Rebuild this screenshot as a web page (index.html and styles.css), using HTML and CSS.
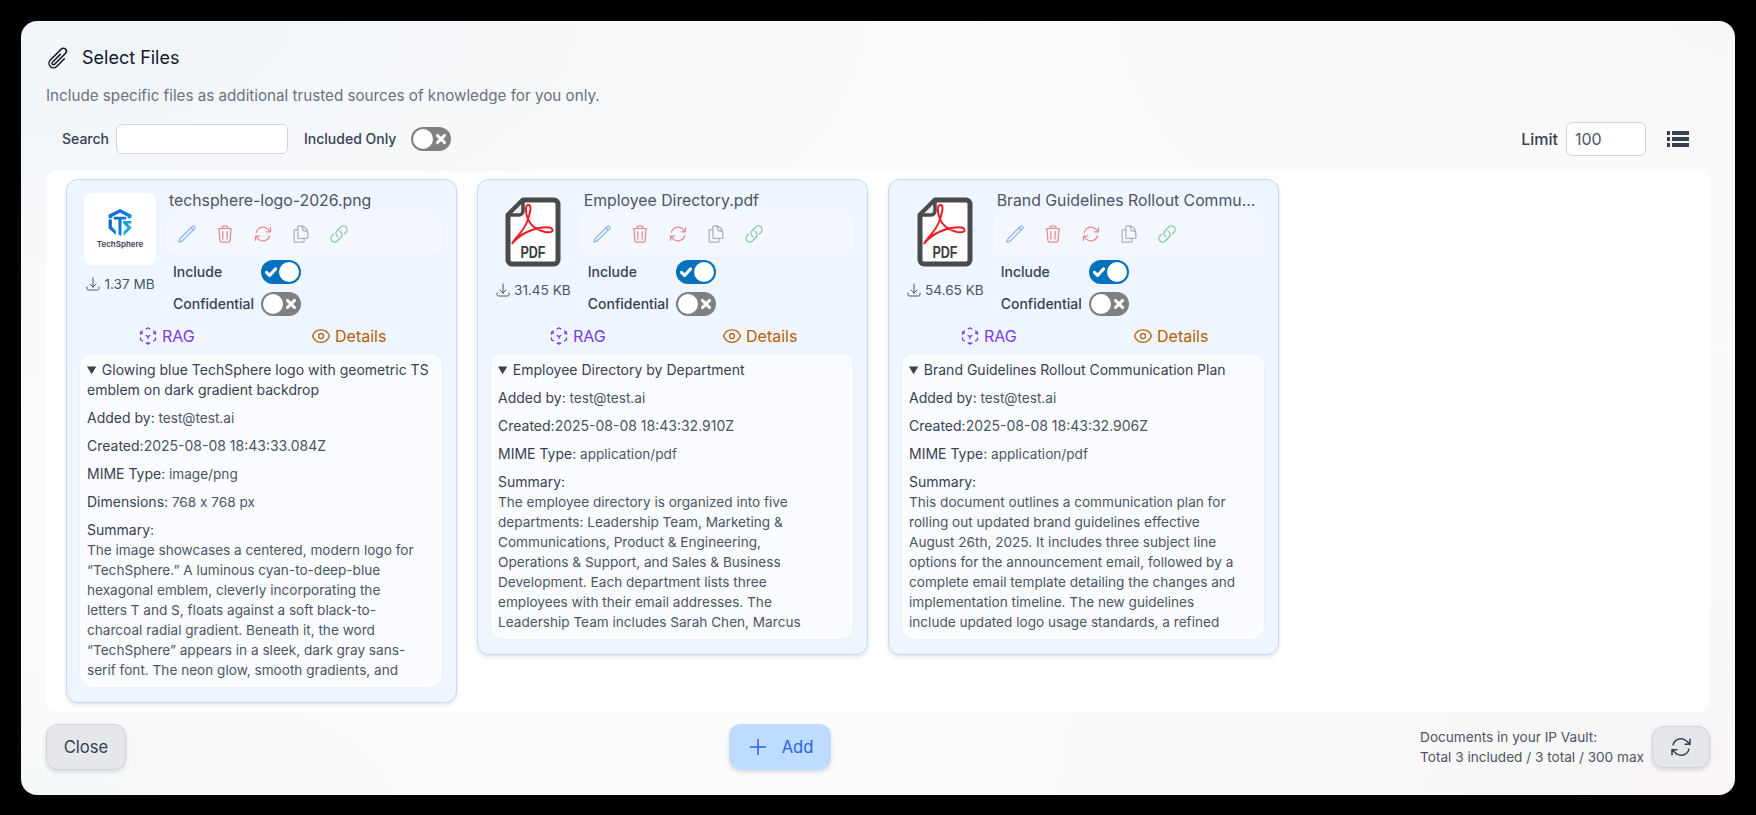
FILE: index.html
```html
<!DOCTYPE html>
<html lang="en">
<head>
    <meta charset="UTF-8">
    <meta name="viewport" content="width=device-width, initial-scale=1.0">
    <title>Select Files</title>
    <link rel="stylesheet" href="styles.css">
</head>
<body>
    <svg class="sprite" aria-hidden="true">
        <symbol id="i-pencil" viewBox="0 0 24 24"><path d="m16.862 4.487 1.687-1.688a1.875 1.875 0 1 1 2.652 2.652L6.832 19.82a4.5 4.5 0 0 1-1.897 1.13l-2.685.8.8-2.685a4.5 4.5 0 0 1 1.13-1.897L16.863 4.487Zm0 0L19.5 7.125"/></symbol>
        <symbol id="i-trash" viewBox="0 0 24 24"><path d="m14.74 9-.346 9m-4.788 0L9.26 9m9.968-3.21c.342.052.682.107 1.022.166m-1.022-.165L18.16 19.673a2.25 2.25 0 0 1-2.244 2.077H8.084a2.25 2.25 0 0 1-2.244-2.077L4.772 5.79m14.456 0a48.108 48.108 0 0 0-3.478-.397m-12 .562c.34-.059.68-.114 1.022-.165m0 0a48.11 48.11 0 0 1 3.478-.397m7.5 0v-.916c0-1.18-.91-2.164-2.09-2.201a51.964 51.964 0 0 0-3.32 0c-1.18.037-2.09 1.022-2.09 2.201v.916m7.5 0a48.667 48.667 0 0 0-7.5 0"/></symbol>
        <symbol id="i-refresh" viewBox="0 0 24 24"><path d="M16.023 9.348h4.992v-.001M2.985 19.644v-4.992m0 0h4.992m-4.993 0 3.181 3.183a8.25 8.25 0 0 0 13.803-3.7M4.031 9.865a8.25 8.25 0 0 1 13.803-3.7l3.181 3.182m0-4.991v4.99"/></symbol>
        <symbol id="i-copy" viewBox="0 0 24 24"><path d="M15.75 17.25v3.375c0 .621-.504 1.125-1.125 1.125h-9.75a1.125 1.125 0 0 1-1.125-1.125V7.875c0-.621.504-1.125 1.125-1.125H6.75a9.06 9.06 0 0 1 1.5.124m7.5 10.376h3.375c.621 0 1.125-.504 1.125-1.125V11.25c0-4.46-3.243-8.161-7.5-8.876a9.06 9.06 0 0 0-1.5-.124H9.375c-.621 0-1.125.504-1.125 1.125v3.5m7.5 10.375H9.375a1.125 1.125 0 0 1-1.125-1.125v-9.25m12 6.625v-1.875a3.375 3.375 0 0 0-3.375-3.375h-1.5a1.125 1.125 0 0 1-1.125-1.125v-1.5a3.375 3.375 0 0 0-3.375-3.375H9.75"/></symbol>
        <symbol id="i-link" viewBox="0 0 24 24"><path d="M13.19 8.688a4.5 4.5 0 0 1 1.242 7.244l-4.5 4.5a4.5 4.5 0 0 1-6.364-6.364l1.757-1.757m13.35-.622 1.757-1.757a4.5 4.5 0 0 0-6.364-6.364l-4.5 4.5a4.5 4.5 0 0 0 1.242 7.244"/></symbol>
        <symbol id="i-eye" viewBox="0 0 24 24"><path d="M2.036 12.322a1.012 1.012 0 0 1 0-.639C3.423 7.51 7.36 4.5 12 4.5c4.638 0 8.573 3.007 9.963 7.178.07.207.07.431 0 .639C20.577 16.49 16.64 19.5 12 19.5c-4.638 0-8.573-3.007-9.963-7.178Z"/><path d="M15 12a3 3 0 1 1-6 0 3 3 0 0 1 6 0Z"/></symbol>
        <symbol id="i-cube" viewBox="0 0 24 24"><path d="m21 7.5-2.25-1.313M21 7.5v2.25m0-2.25-2.25 1.313M3 7.5l2.25-1.313M3 7.5l2.25 1.313M3 7.5v2.25m9 3 2.25-1.313M12 12.75l-2.25-1.313M12 12.75V15m0 6.75 2.25-1.313M12 21.75V19.5m0 2.25-2.25-1.313m0-16.875L12 2.25l2.25 1.313M21 14.25v2.25l-2.25 1.313m-13.5 0L3 16.5v-2.25"/></symbol>
        <symbol id="i-tray" viewBox="0 0 24 24"><path d="M3 16.5v2.25A2.25 2.25 0 0 0 5.25 21h13.5A2.25 2.25 0 0 0 21 18.75V16.5M16.5 12 12 16.5m0 0L7.5 12m4.5 4.5V3"/></symbol>
        <symbol id="i-check" viewBox="0 0 20 20"><path d="M3.5 10.5 8 15l8.5-9.5"/></symbol>
        <symbol id="i-x" viewBox="0 0 20 20"><path d="M5 5l10 10M15 5 5 15"/></symbol>
        <symbol id="i-pdf" viewBox="0 0 56 70">
            <path class="pdf-sheet" d="M18 3H49a4 4 0 0 1 4 4V63a4 4 0 0 1-4 4H7a4 4 0 0 1-4-4V18Z"/>
            <path class="pdf-fold" d="M18 3V14a4 4 0 0 1-4 4H3Z"/>
            <path class="pdf-mark" d="M7 47C10 41 18 35 22 25C25 17 27 9 24 8C20 7 20 15 23 22C26 30 32 33 40 35C46 36 50 34 46 31C42 29 30 31 22 35C15 38 9 44 7 47Z"/>
        </symbol>
    </svg>

    <div class="modal">
        <div class="modal-title">
            <svg class="icon icon-clip" viewBox="0 0 24 24"><path d="m18.375 12.739-7.693 7.693a4.5 4.5 0 0 1-6.364-6.364l10.94-10.94A3 3 0 1 1 19.5 7.372L8.552 18.32m.009-.01-.01.01m5.699-9.941-7.81 7.81a1.5 1.5 0 0 0 2.112 2.13"/></svg>
            <h2>Select Files</h2>
        </div>
        <p class="modal-sub">Include specific files as additional trusted sources of knowledge for you only.</p>

        <div class="toolbar">
            <label class="lbl" for="search">Search</label>
            <input class="search-input" id="search" type="text">
            <span class="lbl lbl-included">Included Only</span>
            <span class="toggle"><span class="knob"></span><svg class="mark"><use href="#i-x"/></svg></span>
            <span class="toolbar-gap"></span>
            <label class="limit-lbl" for="limit">Limit</label>
            <input class="limit-input" id="limit" type="text" value="100">
            <span class="list-btn"><i></i><i></i><i></i></span>
        </div>

        <div class="files">
            <!-- png card -->
            <div class="card">
                <div class="card-top">
                    <div class="card-left">
                        <div class="thumb">
                            <svg class="ts-logo" viewBox="0 0 25 28">
                                <defs>
                                    <linearGradient id="tsBlue" x1="0" y1="0" x2="1" y2="1"><stop offset="0" stop-color="#0a5fc4"/><stop offset="1" stop-color="#1590e0"/></linearGradient>
                                    <linearGradient id="tsCyan" x1="0" y1="0" x2="1" y2="1"><stop offset="0" stop-color="#1292dc"/><stop offset="1" stop-color="#19c4dc"/></linearGradient>
                                </defs>
                                <path d="M1.5 10V6.5L12.5 1 23.5 6.5V10H20V8.5L12.5 4.6 5 8.5V10Z" fill="url(#tsBlue)"/>
                                <path d="M1.5 11V19.5L8.5 26V22L4.6 18V11ZM6.5 8.5H18.5V11H14V27L11 25.5V11H6.5Z" fill="url(#tsBlue)"/>
                                <path d="M15.5 12.5H23.5V15H19.8L23.8 19 16 26.8V22.8L19.8 19 15.5 14.8Z" fill="url(#tsCyan)"/>
                            </svg>
                            <span class="ts-name">TechSphere</span>
                        </div>
                        <div class="size size-thumb"><svg class="icon"><use href="#i-tray"/></svg>1.37 MB</div>
                    </div>
                    <div class="card-right">
                        <div class="file-name">techsphere-logo-2026.png</div>
                        <div class="actions">
                            <svg class="icon a-blue"><use href="#i-pencil"/></svg>
                            <svg class="icon a-red"><use href="#i-trash"/></svg>
                            <svg class="icon a-red"><use href="#i-refresh"/></svg>
                            <svg class="icon a-gray"><use href="#i-copy"/></svg>
                            <svg class="icon a-green"><use href="#i-link"/></svg>
                        </div>
                        <div class="opt"><span class="lbl">Include</span><span class="toggle on"><svg class="mark"><use href="#i-check"/></svg><span class="knob"></span></span></div>
                        <div class="opt"><span class="lbl">Confidential</span><span class="toggle"><span class="knob"></span><svg class="mark"><use href="#i-x"/></svg></span></div>
                    </div>
                </div>
                <div class="tabs">
                    <span class="tab tab-rag"><svg class="icon"><use href="#i-cube"/></svg>RAG</span>
                    <span class="tab tab-details"><svg class="icon"><use href="#i-eye"/></svg>Details</span>
                </div>
                <div class="panel">
                    <details open>
                        <summary>Glowing blue TechSphere logo with geometric TS emblem on dark gradient backdrop</summary>
                        <p><b>Added by:</b> test@test.ai</p>
                        <p class="stamp"><b>Created:</b>2025-08-08 18:43:33.084Z</p>
                        <p><b>MIME Type:</b> image/png</p>
                        <p class="dims"><b>Dimensions:</b> 768 x 768 px</p>
                        <p><b>Summary:</b><br>The image showcases a centered, modern logo for “TechSphere.” A luminous cyan-to-deep-blue hexagonal emblem, cleverly incorporating the letters T and S, floats against a soft black-to-charcoal radial gradient. Beneath it, the word “TechSphere” appears in a sleek, dark gray sans-serif font. The neon glow, smooth gradients, and</p>
                    </details>
                </div>
            </div>

            <!-- pdf cards -->
            <div class="card">
                <div class="card-top">
                    <div class="card-left">
                        <svg class="pdf-icon" viewBox="0 0 56 70"><use href="#i-pdf"/><text class="pdf-text" x="28" y="61" text-anchor="middle" textLength="25" lengthAdjust="spacingAndGlyphs">PDF</text></svg>
                        <div class="size"><svg class="icon"><use href="#i-tray"/></svg>31.45 KB</div>
                    </div>
                    <div class="card-right">
                        <div class="file-name">Employee Directory.pdf</div>
                        <div class="actions">
                            <svg class="icon a-blue"><use href="#i-pencil"/></svg>
                            <svg class="icon a-red"><use href="#i-trash"/></svg>
                            <svg class="icon a-red"><use href="#i-refresh"/></svg>
                            <svg class="icon a-gray"><use href="#i-copy"/></svg>
                            <svg class="icon a-green"><use href="#i-link"/></svg>
                        </div>
                        <div class="opt"><span class="lbl">Include</span><span class="toggle on"><svg class="mark"><use href="#i-check"/></svg><span class="knob"></span></span></div>
                        <div class="opt"><span class="lbl">Confidential</span><span class="toggle"><span class="knob"></span><svg class="mark"><use href="#i-x"/></svg></span></div>
                    </div>
                </div>
                <div class="tabs">
                    <span class="tab tab-rag"><svg class="icon"><use href="#i-cube"/></svg>RAG</span>
                    <span class="tab tab-details"><svg class="icon"><use href="#i-eye"/></svg>Details</span>
                </div>
                <div class="panel">
                    <details open>
                        <summary>Employee Directory by Department</summary>
                        <p><b>Added by:</b> test@test.ai</p>
                        <p class="stamp"><b>Created:</b>2025-08-08 18:43:32.910Z</p>
                        <p><b>MIME Type:</b> application/pdf</p>
                        <p><b>Summary:</b><br>The employee directory is organized into five departments: Leadership Team, Marketing &amp; Communications, Product &amp; Engineering, Operations &amp; Support, and Sales &amp; Business Development. Each department lists three employees with their email addresses. The Leadership Team includes Sarah Chen, Marcus</p>
                    </details>
                </div>
            </div>

            <div class="card">
                <div class="card-top">
                    <div class="card-left">
                        <svg class="pdf-icon" viewBox="0 0 56 70"><use href="#i-pdf"/><text class="pdf-text" x="28" y="61" text-anchor="middle" textLength="25" lengthAdjust="spacingAndGlyphs">PDF</text></svg>
                        <div class="size"><svg class="icon"><use href="#i-tray"/></svg>54.65 KB</div>
                    </div>
                    <div class="card-right">
                        <div class="file-name">Brand Guidelines Rollout Communication Plan.pdf</div>
                        <div class="actions">
                            <svg class="icon a-blue"><use href="#i-pencil"/></svg>
                            <svg class="icon a-red"><use href="#i-trash"/></svg>
                            <svg class="icon a-red"><use href="#i-refresh"/></svg>
                            <svg class="icon a-gray"><use href="#i-copy"/></svg>
                            <svg class="icon a-green"><use href="#i-link"/></svg>
                        </div>
                        <div class="opt"><span class="lbl">Include</span><span class="toggle on"><svg class="mark"><use href="#i-check"/></svg><span class="knob"></span></span></div>
                        <div class="opt"><span class="lbl">Confidential</span><span class="toggle"><span class="knob"></span><svg class="mark"><use href="#i-x"/></svg></span></div>
                    </div>
                </div>
                <div class="tabs">
                    <span class="tab tab-rag"><svg class="icon"><use href="#i-cube"/></svg>RAG</span>
                    <span class="tab tab-details"><svg class="icon"><use href="#i-eye"/></svg>Details</span>
                </div>
                <div class="panel">
                    <details open>
                        <summary>Brand Guidelines Rollout Communication Plan</summary>
                        <p><b>Added by:</b> test@test.ai</p>
                        <p class="stamp"><b>Created:</b>2025-08-08 18:43:32.906Z</p>
                        <p><b>MIME Type:</b> application/pdf</p>
                        <p><b>Summary:</b><br>This document outlines a communication plan for rolling out updated brand guidelines effective August 26th, 2025. It includes three subject line options for the announcement email, followed by a complete email template detailing the changes and implementation timeline. The new guidelines include updated logo usage standards, a refined</p>
                    </details>
                </div>
            </div>
        </div>

        <div class="footer">
            <button class="btn btn-close">Close</button>
            <button class="btn btn-add"><svg class="icon" viewBox="0 0 24 24"><path d="M12 4.5v15m7.5-7.5h-15"/></svg>Add</button>
            <div class="footer-right">
                <div class="vault">Documents in your IP Vault:<br>Total 3 included / 3 total / 300 max</div>
                <button class="btn btn-refresh"><svg class="icon"><use href="#i-refresh"/></svg></button>
            </div>
        </div>
    </div>
</body>
</html>
```

FILE: styles.css
```css
* {
    box-sizing: border-box;
}
html, body {
    height: 100%;
}
body {
    margin: 0;
    padding: 21px;
    background: #000;
    font-family: Inter, "Noto Sans", sans-serif;
    font-size: 14px;
    line-height: 20px;
    color: #374151;
    overflow: hidden;
}
.sprite {
    display: none;
}
.icon {
    width: 24px;
    height: 24px;
    fill: none;
    stroke: currentColor;
    stroke-width: 1.5;
    stroke-linecap: round;
    stroke-linejoin: round;
    flex: none;
}

.modal {
    height: 774px;
    display: flex;
    flex-direction: column;
    padding: 25px 25px 0;
    border-radius: 16px;
    background:
        radial-gradient(1000px 420px at 0% 0%, #f1f5f9 0%, rgba(241, 245, 249, 0) 100%),
        radial-gradient(800px 500px at 100% 100%, #f9f5f8 0%, rgba(249, 245, 248, 0) 100%),
        radial-gradient(800px 400px at 100% 0%, #faf7f8 0%, rgba(250, 247, 248, 0) 100%),
        radial-gradient(600px 200px at 0% 100%, #f6f9f9 0%, rgba(246, 249, 249, 0) 100%),
        #fbfbfb;
}
.modal-title {
    display: flex;
    align-items: center;
    gap: 12px;
    height: 24px;
    color: #111827;
}
.modal-title h2 {
    margin: 0;
    font-size: 18px;
    line-height: 24px;
    font-weight: 400;
}
.modal-sub {
    margin: 14px 0;
    font-size: 15.2px;
    line-height: 24px;
    color: #6b7280;
}

.toolbar {
    display: flex;
    align-items: center;
    height: 34px;
    margin-bottom: 15px;
    padding: 0 21px 0 16px;
}
.lbl {
    font-size: 14px;
    font-weight: 500;
    color: #374151;
}
.search-input {
    width: 172px;
    height: 30px;
    margin: 0 16px 0 7px;
    border: 1px solid #d1d5db;
    border-radius: 6px;
    background: #fff;
}
.lbl-included {
    margin-right: 15px;
}
.toolbar-gap {
    flex: 1;
}
.limit-lbl {
    font-size: 16px;
    font-weight: 500;
    color: #374151;
}
.limit-input {
    width: 80px;
    height: 34px;
    margin: 0 21px 0 8px;
    padding: 0 8px;
    border: 1px solid #d1d5db;
    border-radius: 6px;
    background: #fff;
    font: 16px Inter, sans-serif;
    color: #4b5563;
}
.list-btn {
    display: flex;
    flex-direction: column;
    gap: 2px;
    width: 22px;
}
.list-btn i {
    display: block;
    height: 4px;
    background: linear-gradient(to right, #374151 3px, transparent 3px, transparent 5px, #374151 5px);
}

.toggle {
    position: relative;
    display: inline-flex;
    align-items: center;
    justify-content: space-between;
    width: 40px;
    height: 24px;
    padding: 0 2px;
    border-radius: 12px;
    background: #808080;
    flex: none;
}
.toggle.on {
    background: #0071bc;
}
.knob {
    width: 20px;
    height: 20px;
    border-radius: 50%;
    background: #fff;
}
.mark {
    width: 14px;
    height: 14px;
    margin: 0 1px;
    fill: none;
    stroke: #fff;
    stroke-width: 4.5;
    stroke-linecap: round;
    stroke-linejoin: round;
}

.files {
    flex: 1;
    min-height: 0;
    display: grid;
    grid-template-columns: repeat(4, minmax(0, 1fr));
    gap: 20px;
    align-items: start;
    padding: 8px 20px;
    border-radius: 10px;
    background: #fff;
}
.card {
    display: flow-root;
    border: 1px solid #bfdbfe;
    border-radius: 12px;
    background: #eff6ff;
    box-shadow: 0 2px 4px rgba(15, 23, 42, 0.12);
    padding: 8px 0 15px;
}
.card-top {
    display: flex;
    gap: 9px;
    padding: 0 13px 0 17px;
}
.card-left {
    display: flex;
    flex-direction: column;
    align-items: center;
    padding-top: 5px;
    flex: none;
}
.thumb {
    display: flex;
    flex-direction: column;
    align-items: center;
    justify-content: center;
    gap: 1px;
    width: 72px;
    height: 72px;
    border-radius: 8px;
    background: #fff;
}
.ts-logo {
    width: 26px;
    height: 29px;
}
.ts-name {
    font-size: 8px;
    line-height: 12px;
    font-weight: 600;
    color: #374151;
}
.pdf-icon {
    width: 56px;
    height: 70px;
    margin: 4px 0 13px;
}
.pdf-sheet {
    fill: #fff;
    stroke: #4a4a4a;
    stroke-width: 5;
    stroke-linejoin: round;
}
.pdf-fold {
    fill: #ececec;
    stroke: #4a4a4a;
    stroke-width: 3.5;
    stroke-linejoin: round;
}
.pdf-mark {
    fill: none;
    stroke: #ee1c25;
    stroke-width: 2;
}
.pdf-text {
    font-family: "Liberation Sans", sans-serif;
    font-size: 16px;
    font-weight: 700;
    fill: #3c3c3c;
}
.size {
    display: flex;
    align-items: center;
    gap: 3px;
    font-size: 13.6px;
    color: #4b5563;
    white-space: nowrap;
}
.size-thumb {
    margin-top: 9px;
}
.size .icon {
    width: 16px;
    height: 16px;
}
.card-right {
    flex: 1;
    min-width: 0;
}
.file-name {
    height: 24px;
    padding: 1px 8px 0 4px;
    font-size: 15.8px;
    line-height: 23px;
    color: #4b5563;
    white-space: nowrap;
    overflow: hidden;
    text-overflow: ellipsis;
}
.actions {
    display: flex;
    align-items: center;
    gap: 18px;
    height: 44px;
    padding-left: 12px;
    border-radius: 12px;
    background: #f4f8fe;
}
.actions .icon {
    width: 20px;
    height: 20px;
}
.a-blue { color: #8fb4f5; }
.a-red { color: #e58b92; }
.a-gray { color: #aab1bc; }
.a-green { color: #83c9a5; }
.opt {
    display: flex;
    align-items: center;
    height: 24px;
    margin-top: 4px;
    padding-left: 8px;
}
.opt + .opt {
    margin-top: 8px;
}
.opt .lbl {
    width: 88px;
}
.tabs {
    display: grid;
    grid-template-columns: 1fr 1fr;
    height: 24px;
    margin: 8px 16px 0 8px;
}
.tab {
    display: flex;
    align-items: center;
    justify-content: center;
    gap: 4px;
    font-size: 16px;
    line-height: 24px;
}
.tab .icon {
    width: 20px;
    height: 20px;
}
.tab-rag { color: #7c3aed; }
.tab-details { color: #b45f06; }
.panel {
    margin: 6px 14px 0 13px;
    padding: 6px 7px 7px;
    border-radius: 12px;
    background: #fbfcff;
    box-shadow: 0 0 3px rgba(15, 23, 42, 0.06);
    color: #4b5563;
    font-size: 13.6px;
}
.panel summary {
    font-size: 14px;
    font-weight: 400;
    color: #374151;
}
.panel p {
    margin: 8px 0 0;
    padding-right: 16px;
}
.panel b {
    font-size: 14px;
    font-weight: 400;
    color: #374151;
}
.panel .stamp {
    font-size: 14px;
}
.panel .dims {
    font-variant-ligatures: no-contextual;
}

.footer {
    display: flex;
    align-items: center;
    justify-content: space-between;
    height: 46px;
    margin-top: 12px;
    margin-bottom: 25px;
}
.btn {
    display: inline-flex;
    align-items: center;
    justify-content: center;
    height: 46px;
    border-radius: 12px;
    font: 16.6px Inter, sans-serif;
    cursor: pointer;
}
.btn-close {
    width: 80px;
    border: 1px solid #d1d5db;
    background: #e5e7eb;
    color: #374151;
    box-shadow: 0 2px 4px rgba(15, 23, 42, 0.14);
}
.btn-add {
    width: 102px;
    margin-left: 13px;
    gap: 12px;
    border: none;
    background: #bfdbfe;
    color: #2563eb;
    box-shadow: 0 2px 4px rgba(15, 23, 42, 0.14);
}
.footer-right {
    display: flex;
    align-items: center;
    gap: 8px;
}
.vault {
    font-size: 13.6px;
    line-height: 20px;
    color: #4b5563;
}
.btn-refresh {
    width: 58px;
    height: 42px;
    border: 1px solid #d1d5db;
    background: #e5e7eb;
    color: #374151;
    box-shadow: 0 2px 4px rgba(15, 23, 42, 0.14);
}
```
